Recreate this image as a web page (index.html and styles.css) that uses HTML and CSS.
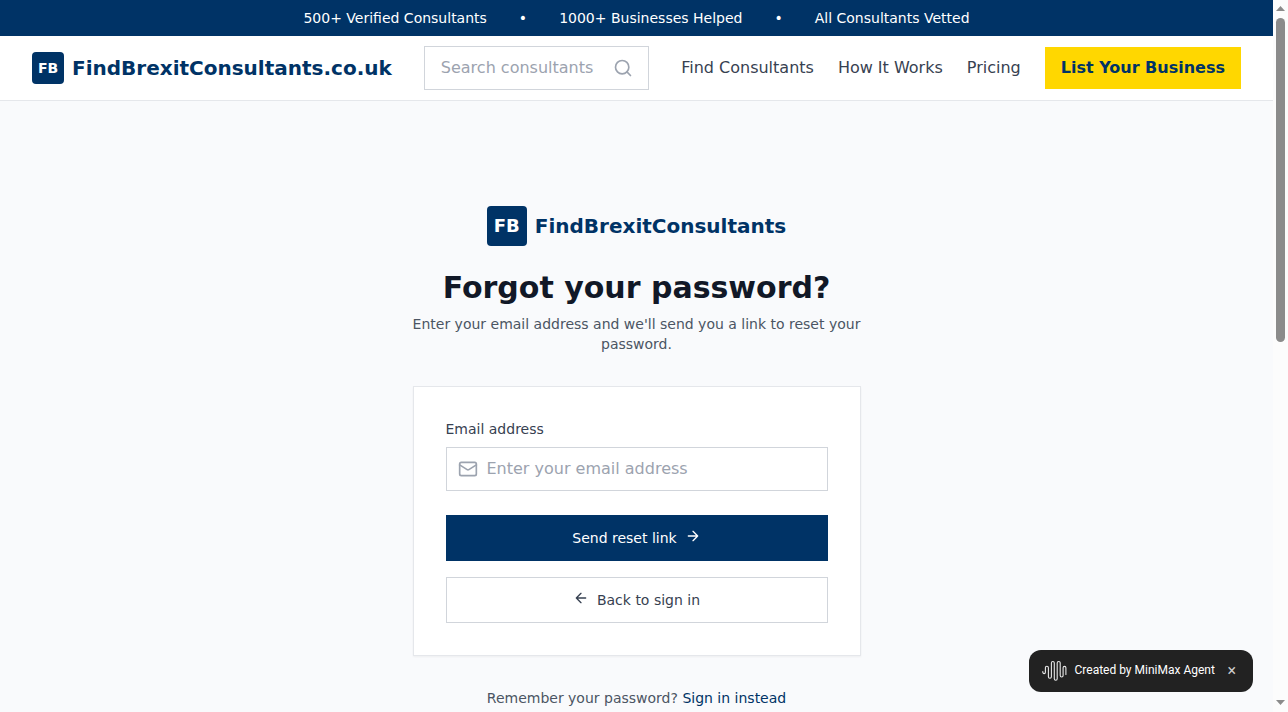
FILE: index.html
```html
<!DOCTYPE html>
<html lang="en">
<head>
<meta charset="utf-8">
<title>Forgot your password?</title>
<link rel="stylesheet" href="styles.css">
</head>
<body>
<div class="viewport">
<div class="page">
  <div class="topbar"><span>500+ Verified Consultants</span><span>•</span><span>1000+ Businesses Helped</span><span>•</span><span>All Consultants Vetted</span></div>
  <header class="header">
    <a class="brand"><span class="mark">FB</span><span>FindBrexitConsultants.co.uk</span></a>
    <div class="search"><span class="search-text">Search consultants</span>
      <svg class="icon20" viewBox="0 0 24 24"><circle cx="11" cy="11" r="8"/><path d="m21 21-4.3-4.3"/></svg>
    </div>
    <nav class="nav"><a>Find Consultants</a><a>How It Works</a><a>Pricing</a><a class="cta">List Your Business</a></nav>
  </header>
  <main class="main">
    <div class="brand"><span class="mark mark-large">FB</span><span>FindBrexitConsultants</span></div>
    <h1 class="title">Forgot your password?</h1>
    <p class="subtitle">Enter your email address and we'll send you a link to reset your password.</p>
    <form class="card">
      <label class="label">Email address</label>
      <div class="field">
        <svg class="icon20" viewBox="0 0 24 24"><rect width="20" height="16" x="2" y="4" rx="2"/><path d="m22 7-8.97 5.7a1.94 1.94 0 0 1-2.06 0L2 7"/></svg>
        <span>Enter your email address</span>
      </div>
      <a class="button button-primary"><span>Send reset link</span><svg class="icon16" viewBox="0 0 24 24"><path d="M5 12h14M12 5l7 7-7 7"/></svg></a>
      <a class="button button-outline"><svg class="icon16" viewBox="0 0 24 24"><path d="m12 19-7-7 7-7M19 12H5"/></svg><span>Back to sign in</span></a>
    </form>
    <p class="signin">Remember your password? <a>Sign in instead</a></p>
  </main>
</div>
<div class="scrollbar"><svg class="arrow" viewBox="0 0 9 5"><path d="M0 5 4.5 0 9 5z"/></svg><div class="thumb"></div><svg class="arrow arrow-down" viewBox="0 0 9 5"><path d="M0 0 4.5 5 9 0z"/></svg></div>
<div class="badge">
  <svg class="wave" viewBox="0 0 26 22"><path d="M.8 11.500v.8a1.300 1.300 0 0 0 2.600 0V7.800a1.500 1.500 0 0 1 3 0V16.700a1.500 1.500 0 0 0 3 0V3a1.450 1.450 0 0 1 2.900 0V18.800a1.450 1.450 0 0 0 2.900 0V3a1.500 1.500 0 0 1 3 0V15.500a1.450 1.450 0 0 0 2.900 0V7.800a1.400 1.400 0 0 1 2.800 0V14.500"/></svg>
  <span class="badge-text">Created by MiniMax Agent</span><span class="close">×</span>
</div>
</div>
</body>
</html>
```
FILE: styles.css
```css
* { box-sizing: border-box; }
body { margin: 0; overflow: hidden; font: 16px/24px "DejaVu Sans", sans-serif; color: #374151; }
.viewport { display: grid; grid-template-columns: 1fr 15px; height: 712px; overflow: hidden; position: relative; background: #f9fafb; }
.page { height: 712px; overflow: hidden; background: #f9fafc; }
.topbar { height: 36px; display: flex; justify-content: center; align-items: center; gap: 32px; background: #003366; color: #fff; font-size: 14px; line-height: 20px; }
.header { height: 65px; padding: 0 32px; display: flex; align-items: center; background: #fff; border-bottom: 1px solid #e5e7eb; }
.brand { display: flex; align-items: center; gap: 8px; color: #003366; font-size: 20px; line-height: 28px; font-weight: 700; white-space: nowrap; }
.mark { display: flex; align-items: center; justify-content: center; width: 32px; height: 32px; border-radius: 4px; background: #003366; color: #fff; font-size: 14px; }
.mark-large { width: 40px; height: 40px; font-size: 18px; }
.search { flex: 1; height: 44px; margin: 0 32px; padding: 0 15px 0 16px; border: 1px solid #d1d5db; display: flex; align-items: center; justify-content: space-between; color: #9ca3af; white-space: nowrap; }
svg { display: block; flex: none; }
.icon20, .icon16 { width: 20px; height: 20px; fill: none; stroke: currentColor; stroke-width: 2; stroke-linecap: round; stroke-linejoin: round; }
.icon16 { width: 16px; height: 16px; margin-bottom: 4px; }
.nav { display: flex; align-items: center; gap: 24px; white-space: nowrap; }
.cta { height: 42px; padding: 9px 16px; background: #ffd700; color: #003366; font-weight: 700; }
.main { width: 448px; margin: 0 auto; padding-top: 105px; display: flex; flex-direction: column; align-items: center; }
.title { margin: 24px 0 0; font-size: 30px; line-height: 36px; font-weight: 700; color: #111827; }
.subtitle { margin: 8px 0 0; font-size: 14px; line-height: 20px; text-align: center; color: #4b5563; }
.card { width: 448px; height: 270px; margin-top: 32px; padding: 32px; border: 1px solid #e5e7eb; background: #fff; box-shadow: 0 1px 2px rgba(0, 0, 0, .05); }
.label { display: block; font-size: 14px; line-height: 20px; }
.field { height: 44px; margin-top: 8px; padding: 0 11px; border: 1px solid #d1d5db; display: flex; align-items: center; gap: 9px; color: #9ca3af; }
.button { height: 46px; display: flex; align-items: center; justify-content: center; gap: 8px; font-size: 14px; line-height: 20px; }
.button-primary { margin-top: 24px; background: #003366; color: #fff; }
.button-outline { margin-top: 16px; border: 1px solid #d1d5db; }
.signin { margin: 32px 0 0; font-size: 14px; line-height: 20px; color: #4b5563; }
.signin a { color: #003366; }
.scrollbar { height: 712px; padding: 6px 0 7px; background: #fcfcfc; display: flex; flex-direction: column; align-items: center; }
.arrow { width: 9px; height: 5px; fill: #8b8b8b; }
.arrow-down { margin-top: auto; }
.thumb { width: 9px; height: 324px; margin-top: 7px; border-radius: 5px; background: #8b8b8b; }
.badge { position: absolute; left: 1029px; top: 650px; width: 224px; height: 42px; border-radius: 12px; padding: 0 17px 0 13px; background: #222; color: #fff; display: flex; align-items: center; font: 12px/18px Roboto, sans-serif; white-space: nowrap; }
.badge-text { margin-bottom: 2px; }
.wave { width: 26px; height: 22px; margin-right: 6.500px; fill: none; stroke: #e8e8e8; stroke-width: 1.1; stroke-linecap: round; }
.close { margin-left: auto; font-size: 16px; color: #ccc; }
```
